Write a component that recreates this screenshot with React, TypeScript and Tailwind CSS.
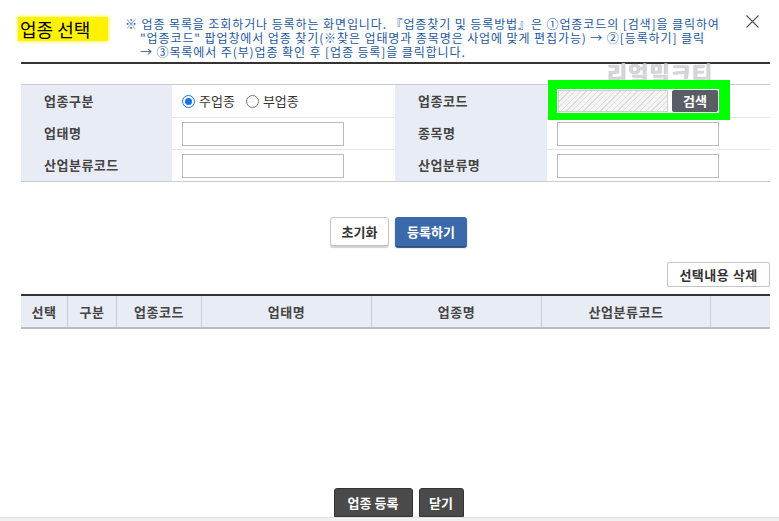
import { useState } from 'react';

const font = { fontFamily: '"Noto Sans CJK KR", "Noto Sans", sans-serif' };

function LabelCell({ children }: { children: React.ReactNode }) {
  return (
    <div className="flex items-center bg-[#e8ecf5] pl-[23px] text-[13px] font-bold tracking-[0.5px] text-[#444]">
      {children}
    </div>
  );
}

function TextInput() {
  return <input className="h-[24px] w-[162px] border border-[#bbbbbb] bg-white outline-none" />;
}

export default function App() {
  const [kind, setKind] = useState<'main' | 'sub'>('main');

  return (
    <div className="relative h-[521px] w-[779px] overflow-hidden bg-white text-[#333]" style={font}>
      {/* header */}
      <div className="flex h-[64px] w-[749px] ml-[21px] items-start border-b-2 border-[#333]">
        <div className="mt-[17px] -ml-[3px] flex h-[24px] w-[90px] items-center bg-[#fff200] pl-[2px] text-[18px] leading-none text-black shadow-[0_0_4px_#fff200]">
          업종 선택
        </div>
        <div className="ml-[17px] mt-[17px] text-[12px] leading-[14px] tracking-[0.9px] text-[#1d58a0]">
          <div>※ 업종 목록을 조회하거나 등록하는 화면입니다. 『업종찾기 및 등록방법』은 ①업종코드의 [검색]을 클릭하여</div>
          <div className="pl-[15px]">"업종코드" 팝업창에서 업종 찾기(※찾은 업태명과 종목명은 사업에 맞게 편집가능) → ②[등록하기] 클릭</div>
          <div className="pl-[15px]">→ ③목록에서 주(부)업종 확인 후 [업종 등록]을 클릭합니다.</div>
        </div>
        <button className="ml-auto mr-[11px] mt-[15px] text-[#555]">
          <svg width="13" height="13" viewBox="0 0 13 13" fill="none" stroke="currentColor" strokeWidth="1.1">
            <path d="M0.5 0.5l12 12M12.5 0.5l-12 12" />
          </svg>
        </button>
      </div>

      {/* form */}
      <div className="ml-[21px] mt-[20px] grid w-[749px] grid-cols-[151px_223px_152px_223px] border-y border-[#c8ccd4] [&>div]:h-[32px]">
        <LabelCell>업종구분</LabelCell>
        <div className="flex items-center gap-[11px] pl-[10px] text-[13px] text-[#333]">
          <label className="flex items-center gap-[4px]" onClick={() => setKind('main')}>
            <span className={`flex h-[13px] w-[13px] items-center justify-center rounded-full border ${kind === 'main' ? 'border-[#1a73e8]' : 'border-[#777]'}`}>
              {kind === 'main' && <span className="h-[7px] w-[7px] rounded-full bg-[#1a73e8]" />}
            </span>
            주업종
          </label>
          <label className="flex items-center gap-[4px]" onClick={() => setKind('sub')}>
            <span className={`flex h-[13px] w-[13px] items-center justify-center rounded-full border ${kind === 'sub' ? 'border-[#1a73e8]' : 'border-[#777]'}`}>
              {kind === 'sub' && <span className="h-[7px] w-[7px] rounded-full bg-[#1a73e8]" />}
            </span>
            부업종
          </label>
        </div>
        <LabelCell>업종코드</LabelCell>
        <div className="relative flex items-center pl-[10px]">
          {/* watermark */}
          <span
            className="absolute left-[60px] top-[-29px] text-[22px] font-bold tracking-[1px] text-[#d6d6da]"
            style={{ textShadow: '0 0 1px #9a9aa0' }}
          >
            리얼밀크티
          </span>
          <div className="absolute left-[1px] top-[-5px] h-[40px] w-[182px] bg-[#00ff00]" />
          <div className="relative flex items-center gap-[4px] bg-white p-[1px]">
            <div className="h-[22px] w-[110px] border border-[#cfcfcf] bg-[repeating-linear-gradient(135deg,#f4f4f4_0px,#f4f4f4_3px,#dcdcdc_3px,#dcdcdc_4px)]" />
            <button className="h-[22px] w-[46px] rounded-[2px] bg-[#5a5d66] text-[13px] font-bold text-white">검색</button>
          </div>
        </div>

        <LabelCell>업태명</LabelCell>
        <div className="flex items-center border-t border-[#e4e6ea] pl-[10px]"><TextInput /></div>
        <LabelCell>종목명</LabelCell>
        <div className="flex items-center border-t border-[#e4e6ea] pl-[10px]"><TextInput /></div>

        <LabelCell>산업분류코드</LabelCell>
        <div className="flex items-center border-t border-[#e4e6ea] pl-[10px]"><TextInput /></div>
        <LabelCell>산업분류명</LabelCell>
        <div className="flex items-center border-t border-[#e4e6ea] pl-[10px]"><TextInput /></div>
      </div>

      {/* actions */}
      <div className="mt-[35px] flex justify-center gap-[6px] pl-[18px]">
        <button className="h-[29px] w-[59px] rounded-[3px] border border-[#c4c4c4] bg-white text-[13px] font-bold text-[#333] shadow-[0_2px_1px_#d0d0d0]">
          초기화
        </button>
        <button className="h-[29px] w-[72px] rounded-[3px] bg-[#3b6aab] text-[13px] font-bold text-white shadow-[0_2px_1px_#2a4d80]">
          등록하기
        </button>
      </div>

      <div className="mt-[16px] flex w-[770px] justify-end">
        <button className="h-[25px] w-[103px] rounded-[2px] border border-[#c4c4c4] bg-white text-[13px] font-bold tracking-[0.5px] text-[#333]">
          선택내용 삭제
        </button>
      </div>

      {/* list header */}
      <div className="ml-[21px] mt-[7px] grid w-[749px] grid-cols-[47px_49px_85px_170px_170px_169px_59px] border-t-2 border-b-2 border-t-[#333] border-b-[#b8bcc4] bg-[#e8ecf5] text-[13px] font-bold tracking-[0.5px] text-[#444]">
        {['선택', '구분', '업종코드', '업태명', '업종명', '산업분류코드', ''].map((h, i) => (
          <div key={i} className={`flex h-[31px] items-center justify-center ${i < 6 ? 'border-r border-[#c8ccd4]' : ''}`}>
            {h}
          </div>
        ))}
      </div>

      {/* footer */}
      <div className="absolute bottom-0 left-0 w-full">
        <div className="flex justify-center gap-[6px] pl-[18px]">
          <button className="h-[29px] w-[79px] rounded-t-[3px] border border-[#333] bg-[#4a4a4a] text-[13px] font-bold text-white">
            업종 등록
          </button>
          <button className="h-[29px] w-[45px] rounded-t-[3px] border border-[#333] bg-[#4a4a4a] text-[13px] font-bold text-white">
            닫기
          </button>
        </div>
        <div className="h-[4px] w-full border-t border-[#e2e2e2] bg-[#f0f0f0]" />
      </div>
    </div>
  );
}
